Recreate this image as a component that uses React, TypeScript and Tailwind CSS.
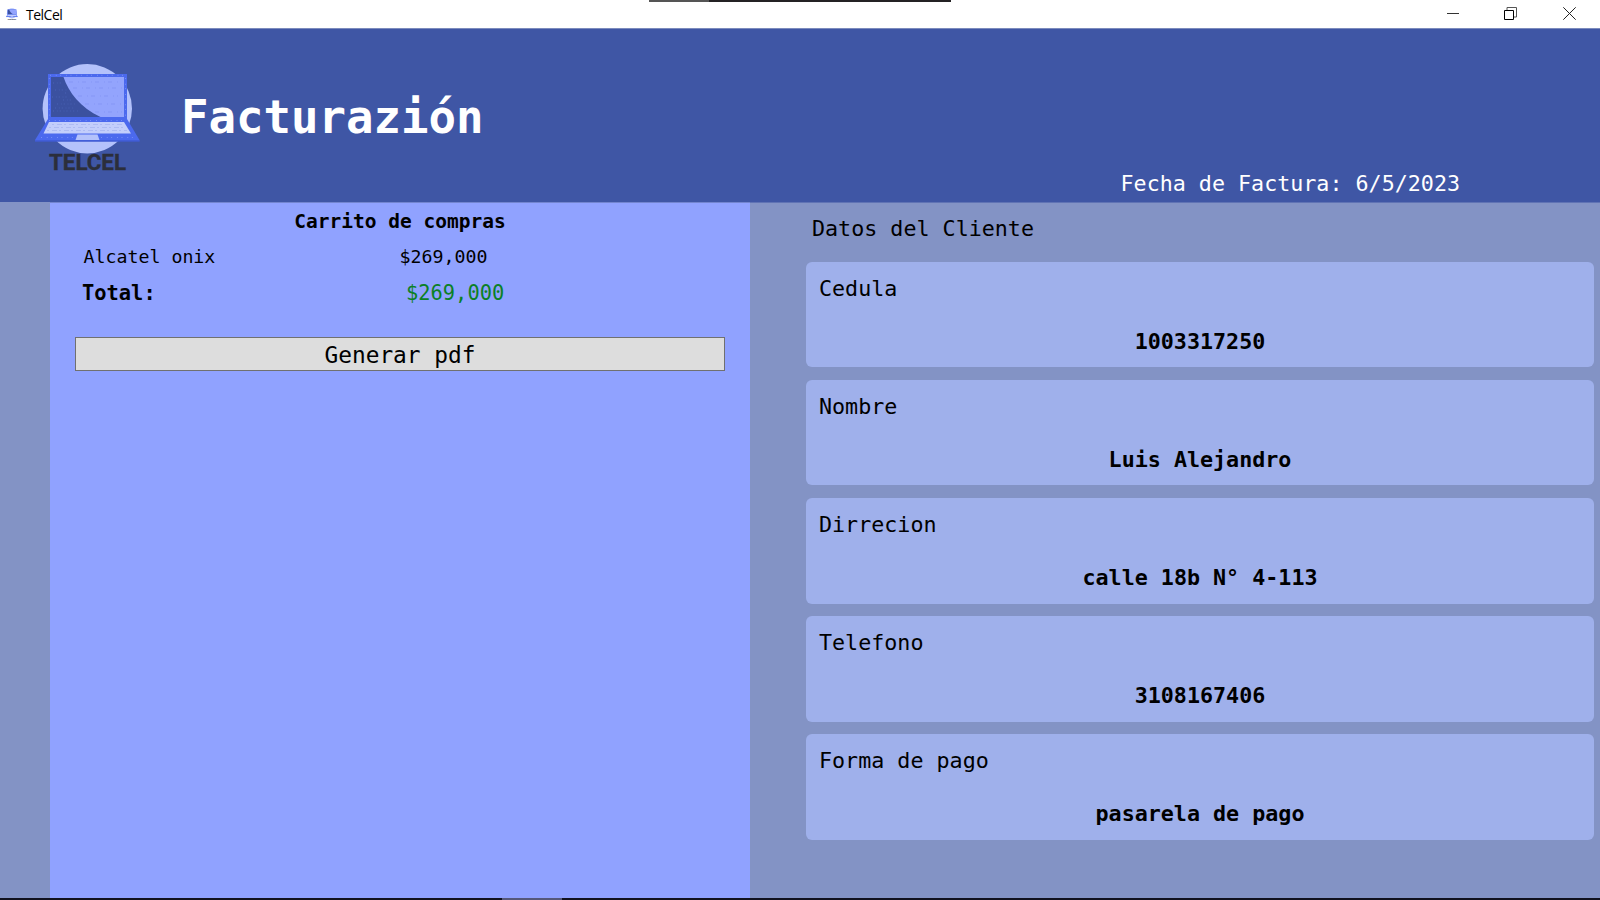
const mono = "font-['DejaVu_Sans_Mono',monospace]";

const fields = [
  { label: "Cedula", value: "1003317250" },
  { label: "Nombre", value: "Luis Alejandro" },
  { label: "Dirrecion", value: "calle 18b N° 4-113" },
  { label: "Telefono", value: "3108167406" },
  { label: "Forma de pago", value: "pasarela de pago" },
];

function Laptop({ className, detailed }: { className: string; detailed?: boolean }) {
  return (
    <svg viewBox="0 0 106 112" className={className}>
      <circle cx="52.3" cy="45.7" r="44.7" fill="#b4c2fb" />
      <path d="M13 11h79v46H13z" fill="#4b69ee" />
      <path d="M16 14h73v40H16z" fill="#93a4fd" />
      <path d="M16 14h12.500c5 15 17 31 37 40H16z" fill="#3b51a0" />
      <path d="M13 56h79l12.500 21v1.500H0V77z" fill="#4b69ee" />
      <path d="M0 77.500h104.500v1H0z" fill="#3a55c4" />
      <path d="M14 59h75l7 11.500H8.500z" fill="#c3cefb" />
      <path d="M42.500 71.500h20l2 5.500h-24z" fill="#b4c2fb" />
      {detailed && (
        <g fill="none" strokeWidth="0.7">
          <path d="M18 20h8M20 27h12M17 34h16M22 41h18M18 48h25M28 37h9M30 30h3M20 45h20" stroke="#5871c8" strokeDasharray="0.8 3.1 0.6 2.300" />
          <path d="M34 19h52M38 25h49M43 33h40M50 41h36M60 49h27" stroke="#8193f2" strokeDasharray="4 5 1 3" />
          <path d="M17 61.500h70M14 64.500h76M12 67.500h80" stroke="#a5b3ef" strokeDasharray="2 3 5 2" />
          <path d="M15 12.300h75M14.300 15v40M90.500 15v40M14 57.500h76M6 74.500h33M66 74.500h33" stroke="#98a9fa" strokeDasharray="0.8 5 0.8 3.700" />
        </g>
      )}
      <text
        x="52.5"
        y="107"
        textAnchor="middle"
        textLength="77"
        lengthAdjust="spacingAndGlyphs"
        fontFamily="Roboto, sans-serif"
        fontWeight="700"
        fontSize="21.5"
        fill="#2b2e3b"
        stroke="#2b2e3b"
        strokeWidth="0.3"
      >
        TELCEL
      </text>
    </svg>
  );
}

function TitleBar() {
  return (
    <div className="relative flex h-7 shrink-0 items-center bg-white">
      <div className="absolute top-0 left-[649px] flex h-0.5 w-[302px]">
        <div className="w-[60px] bg-[#555555]" />
        <div className="flex-1 bg-[#242224]" />
      </div>
      <Laptop className="ml-[6px] h-[13px] w-3" />
      <span className="ml-2 pt-px font-['Open_Sans',sans-serif] text-[14px] leading-7 tracking-[-0.500px] text-black">TelCel</span>
      <div className="ml-auto flex items-center pr-6 pb-px">
        <svg width="12" height="12" viewBox="0 0 12 12" className="mr-[45px]">
          <path d="M0 5.500h12" stroke="#333" fill="none" />
        </svg>
        <svg width="13" height="13" viewBox="0 0 13 13" className="mr-[46px]">
          <path d="M3 3V.5h9.500V10H10" stroke="#555" fill="none" />
          <path d="M.5 3.500h9v9h-9z" stroke="#000" fill="none" />
        </svg>
        <svg width="13" height="13" viewBox="0 0 13 13">
          <path d="M.3.3l12.400 12.400M12.700.3L.3 12.700" stroke="#222" fill="none" />
        </svg>
      </div>
    </div>
  );
}

export default function App() {
  return (
    <div className={`flex h-[900px] w-[1600px] flex-col overflow-hidden bg-[#8393c5] text-black ${mono}`}>
      <TitleBar />
      <header className="flex h-[174px] shrink-0 border-t border-b border-t-[#7c8bbd] border-b-[#3f56a5] bg-[#3f56a5]">
        <Laptop detailed className="mt-[34px] ml-[35px] h-28 w-[106px]" />
        <h1 className="mt-[61px] ml-[40px] text-[45.700px] leading-[56px] font-bold text-white">Facturazión</h1>
        <p className="mt-[141px] mr-[140px] ml-auto text-[21.700px] leading-[28px] whitespace-pre text-white">Fecha de Factura: 6/5/2023</p>
      </header>
      <main className="flex min-h-0 flex-1">
        <section className="ml-[50px] w-[700px] border-t border-[#7385d0] bg-[#90a2ff] px-[25px]">
          <h2 className="pt-[7px] text-center text-[19.500px] leading-6 font-bold">Carrito de compras</h2>
          <div className="mt-[11px] flex pl-[8.500px] text-[18.250px] leading-6">
            <span className="w-[316px]">Alcatel onix</span>
            <span>$269,000</span>
          </div>
          <div className="mt-3 flex pl-[7px] text-[20.400px] leading-6">
            <span className="w-[324px] font-bold">Total:</span>
            <span className="text-[#0b8026]">$269,000</span>
          </div>
          <button className="mt-[32px] block h-[34px] w-[650px] border border-[#707070] bg-[#dddddd] pt-px text-[22.800px] leading-8">
            Generar pdf
          </button>
        </section>
        <section className="w-[850px] border-t border-[#6073b4] pr-[6px] pl-14">
          <h2 className="h-[59px] pt-3 pl-[6px] text-[21.700px] leading-[28px]">Datos del Cliente</h2>
          <div className="flex flex-col gap-[12.700px]">
            {fields.map((f) => (
              <div key={f.label} className="h-[105.400px] rounded-[6px] bg-[#9fb0eb] px-3 pt-[13px] text-[21.700px]">
                <p className="pl-px leading-[28px]">{f.label}</p>
                <p className="mt-[25px] text-center leading-[28px] font-bold">{f.value}</p>
              </div>
            ))}
          </div>
        </section>
      </main>
      <footer className="flex h-0.5 shrink-0 bg-[#11121f]">
        <div className="ml-[502px] w-[60px] bg-[#55587a]" />
      </footer>
    </div>
  );
}
